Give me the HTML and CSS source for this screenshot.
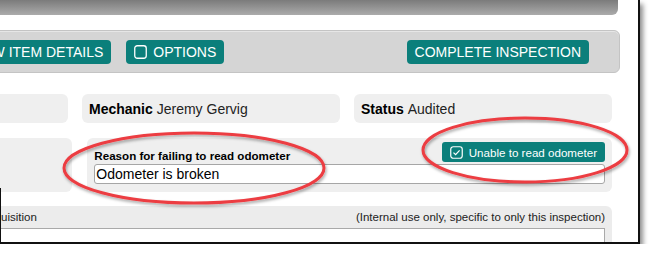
FILE: index.html
```
<!DOCTYPE html>
<html>
<head>
	<title>Inspection</title>
	<link rel="stylesheet" href="styles.css">
</head>
<body>
	<div class="shot">
		<div class="page">
			<div class="header-bar"></div>

			<div class="toolbar">
				<span class="btn">View Item Details</span>
				<span class="btn">
					<svg class="box-icon" width="13" height="14" viewBox="0 0 13 14"><rect x="0.75" y="0.75" width="11.5" height="12.5" rx="2.5" fill="none" stroke="#fff" stroke-width="1.3"/></svg>
					Options
				</span>
				<span class="btn push-right">Complete Inspection</span>
			</div>

			<div class="info-row">
				<div class="info-box"></div>
				<div class="info-box"><b>Mechanic</b>&nbsp;Jeremy Gervig</div>
				<div class="info-box"><b>Status</b>&nbsp;Audited</div>
			</div>

			<div class="odo-row">
				<div class="panel"></div>
				<div class="panel odo-panel">
					<div class="odo-head">
						<label for="odoReason">Reason for failing to read odometer</label>
						<span class="btn btn-small">
							<svg class="box-icon" width="13" height="13" viewBox="0 0 13 13"><rect x="0.75" y="0.75" width="11.5" height="11.5" rx="2.5" fill="none" stroke="#fff" stroke-width="1.2"/><polyline points="3.5,6.6 5.6,8.7 9.6,4.3" fill="none" stroke="#fff" stroke-width="1.2"/></svg>
							Unable to read odometer
						</span>
					</div>
					<input type="text" id="odoReason" value="Odometer is broken">
				</div>
			</div>

			<div class="notes">
				<div class="notes-head">
					<span class="notes-title">Requisition</span>
					<span>(Internal use only, specific to only this inspection)</span>
				</div>
				<div class="notes-box"></div>
			</div>
		</div>

		<!-- callouts drawn over the screenshot -->
		<svg class="marks" width="638" height="242">
			<defs>
				<filter id="soft" x="-10%" y="-20%" width="120%" height="140%">
					<feDropShadow dx="1" dy="2" stdDeviation="1.5" flood-color="#000" flood-opacity="0.35"/>
				</filter>
			</defs>
			<ellipse cx="194" cy="168" rx="130" ry="35" fill="none" stroke="#ec3d42" stroke-width="3" filter="url(#soft)"/>
			<ellipse cx="525" cy="150" rx="102" ry="32" fill="none" stroke="#ec3d42" stroke-width="3" filter="url(#soft)"/>
		</svg>
	</div>
</body>
</html>
```

FILE: styles.css
```
body {
	margin: 0;
	background-color: #fff;
	font-family: Arial, 'Liberation Sans', sans-serif;
	color: #222;
}
.shot {
	position: relative;
	width: 638px;
	height: 242px;
	overflow: hidden;
	background-color: #fff;
	border-right: 2px solid #111;
	border-bottom: 2px solid #111;
	box-shadow: 3px 4px 5px rgba(0, 0, 0, 0.45);
}
.shot::before {
	content: "";
	position: absolute;
	left: 0;
	top: 188px;
	bottom: 0;
	width: 1px;
	background-color: #111;
	z-index: 2;
}
.page {
	margin-left: -190px;
	width: 810px;
}
.header-bar {
	height: 15px;
	margin-right: 2px;
	background: linear-gradient(#7b7b7b, #ababab);
	border-radius: 0 0 6px 0;
}
.toolbar {
	display: flex;
	align-items: center;
	gap: 15px;
	height: 43px;
	box-sizing: border-box;
	margin-top: 15px;
	padding: 0 30px 0 150px;
	background-color: #d5d5d5;
	border: 1px solid #c4c4c4;
	border-radius: 6px;
	box-shadow: inset 0 1px 0 #e6e6e6;
}
.btn {
	display: inline-flex;
	align-items: center;
	gap: 6px;
	height: 24px;
	padding: 0 8px;
	background-color: #0b7f7b;
	color: #fff;
	font-size: 14px;
	text-transform: uppercase;
	border-radius: 4px;
	white-space: nowrap;
}
.push-right {
	margin-left: auto;
}
.btn-small {
	height: 20px;
	gap: 6px;
	font-size: 11.6px;
	text-transform: none;
	border-radius: 3px;
}
.box-icon {
	display: block;
}
.info-row {
	display: grid;
	grid-template-columns: 1fr 1fr 1fr;
	gap: 14px;
	margin: 21px 8px 0 0;
}
.info-box {
	display: flex;
	align-items: center;
	height: 29px;
	padding: 0 7px;
	background-color: #efefef;
	border-radius: 6px;
	font-size: 14px;
	color: #222;
}
.info-box b {
	color: #000;
}
.odo-row {
	display: grid;
	grid-template-columns: 1fr 2fr;
	gap: 15px;
	margin: 15px 8px 0 0;
}
.panel {
	height: 54px;
	box-sizing: border-box;
	background-color: #efefef;
	border-radius: 6px;
}
.odo-panel {
	padding: 4px 7px 8px;
}
.odo-head {
	display: flex;
	justify-content: space-between;
	align-items: flex-end;
}
.odo-head label {
	font-size: 11.6px;
	font-weight: bold;
	line-height: 13px;
	color: #000;
}
.odo-panel input {
	display: block;
	width: 100%;
	height: 20px;
	box-sizing: border-box;
	margin: 2px 0 0;
	padding: 0 1px;
	border: 1px solid #a6a6a6;
	border-radius: 3px;
	font-family: Arial, 'Liberation Sans', sans-serif;
	font-size: 14px;
	color: #000;
	background-color: #fff;
}
.notes {
	margin: 14px 8px 0 0;
	padding: 0 7px;
	background-color: #ececec;
	border-radius: 6px 6px 0 0;
	height: 60px;
}
.notes-head {
	display: flex;
	justify-content: space-between;
	align-items: center;
	height: 22px;
	font-size: 11.5px;
	color: #222;
}
.notes-title {
	margin-left: 163px;
}
.notes-box {
	height: 40px;
	background-color: #fff;
	border: 1px solid #a9a9a9;
}
.marks {
	position: absolute;
	left: 0;
	top: 0;
	pointer-events: none;
}
```
